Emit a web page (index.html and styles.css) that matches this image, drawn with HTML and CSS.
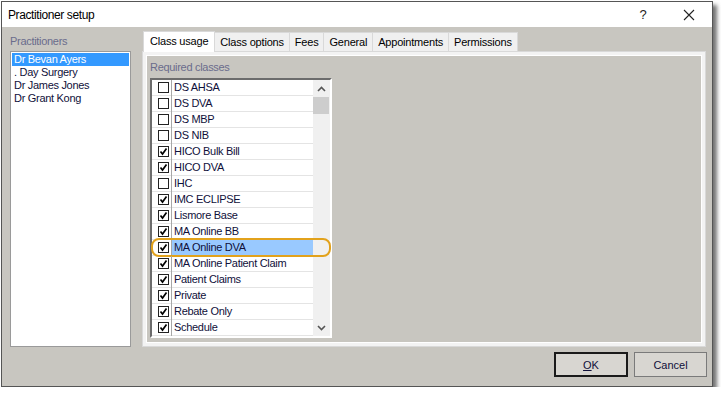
FILE: index.html
```html
<!DOCTYPE html>
<html lang="en">
<head>
    <meta charset="utf-8">
    <title>Practitioner setup</title>
    <link rel="stylesheet" href="styles.css">
</head>
<body>
    <div class="window">
        <div class="titlebar">
            <span class="title">Practitioner setup</span>
            <span class="help">?</span>
            <span class="close">
                <svg width="12" height="12" viewBox="0 0 12 12"><path d="M1 1 L11 11 M11 1 L1 11" stroke="#222" stroke-width="1.1" fill="none"/></svg>
            </span>
        </div>

        <div class="content">
            <div class="left">
                <div class="group-label">Practitioners</div>
                <ul class="list">
                    <li class="selected">Dr Bevan Ayers</li>
                    <li>. Day Surgery</li>
                    <li>Dr James Jones</li>
                    <li>Dr Grant Kong</li>
                </ul>
            </div>

            <div class="right">
                <div class="tabs">
                    <div class="tab active">Class usage</div>
                    <div class="tab">Class options</div>
                    <div class="tab">Fees</div>
                    <div class="tab">General</div>
                    <div class="tab">Appointments</div>
                    <div class="tab">Permissions</div>
                </div>
                <div class="panel">
                    <div class="panel-inner">
                        <div class="group-label">Required classes</div>
                        <div class="checklist">
                            <div class="rows" id="rows"></div>
                            <div class="scrollbar">
                                <div class="arrow">
                                    <svg width="9" height="6" viewBox="0 0 9 6"><path d="M1 5 L4.5 1.5 L8 5" stroke="#555" stroke-width="1.6" fill="none"/></svg>
                                </div>
                                <div class="thumb"></div>
                                <div class="track"></div>
                                <div class="arrow">
                                    <svg width="9" height="6" viewBox="0 0 9 6"><path d="M1 1 L4.5 4.5 L8 1" stroke="#555" stroke-width="1.6" fill="none"/></svg>
                                </div>
                            </div>
                        </div>
                    </div>
                </div>
            </div>
        </div>

        <div class="buttons">
            <button class="btn default"><u>O</u>K</button>
            <button class="btn">Cancel</button>
        </div>
    </div>

    <script>
        var classes = [
            ["DS AHSA", false], ["DS DVA", false], ["DS MBP", false], ["DS NIB", false],
            ["HICO Bulk Bill", true], ["HICO DVA", true], ["IHC", false], ["IMC ECLIPSE", true],
            ["Lismore Base", true], ["MA Online BB", true], ["MA Online DVA", true],
            ["MA Online Patient Claim", true], ["Patient Claims", true], ["Private", true],
            ["Rebate Only", true], ["Schedule", true]
        ];
        var tick = '<svg width="9" height="9" viewBox="0 0 9 9"><path d="M1.5 4.5 L3.5 7 L7.5 1.5" stroke="#000" stroke-width="1.7" fill="none"/></svg>';
        var rows = document.getElementById("rows");
        classes.forEach(function (c) {
            var row = document.createElement("div");
            row.className = "row" + (c[0] == "MA Online DVA" ? " current" : "");
            row.innerHTML = '<span class="check"><span class="box">' + (c[1] ? tick : '') + '</span></span>' +
                '<span class="name">' + c[0] + '</span>' +
                (c[0] == "MA Online DVA" ? '<span class="callout"></span>' : '');
            rows.appendChild(row);
        });
    </script>
</body>
</html>
```

FILE: styles.css
```css
body {
    margin: 0;
    background: #ffffff;
    font-family: "Liberation Sans", Arial, sans-serif;
}
.window {
    box-sizing: border-box;
    margin: 1px 0 0 1px;
    width: 712px;
    height: 386px;
    border: 1px solid #555555;
    background: #c8c6c0;
    box-shadow: 4px 4px 4px rgba(0, 0, 0, 0.55);
    display: flex;
    flex-direction: column;
}
.titlebar {
    height: 25px;
    background: #ffffff;
    display: flex;
    align-items: center;
    padding-left: 6px;
    font-size: 12px;
    letter-spacing: -0.4px;
    color: #000;
}
.title {
    flex: 1;
}
.help {
    width: 46px;
    text-align: center;
    font-size: 13px;
    color: #222;
}
.close {
    width: 46px;
    display: flex;
    justify-content: center;
}
.content {
    display: flex;
    gap: 11px;
    padding: 4px 5px 0 8px;
    font-size: 11px;
    letter-spacing: -0.3px;
}
.left {
    width: 121px;
    display: flex;
    flex-direction: column;
}
.group-label {
    color: #6a6c8c;
    height: 20px;
    line-height: 14px;
    padding-top: 3px;
    box-sizing: border-box;
}
.list {
    list-style: none;
    margin: 0;
    padding: 1px;
    height: 296px;
    box-sizing: border-box;
    background: #ffffff;
    border: 1px solid #9a9a9a;
    color: #10103a;
}
.list li {
    height: 13px;
    line-height: 13px;
    padding-left: 2px;
}
.list li.selected {
    background: #3399ff;
    color: #ffffff;
}
.right {
    width: 564px;
}
.tabs {
    display: flex;
    align-items: flex-end;
    height: 20px;
    padding-left: 1px;
}
.tab {
    height: 19px;
    box-sizing: border-box;
    padding: 3px 5px 0;
    background: #f0f0f0;
    border: 1px solid #d9d9d9;
    border-bottom: none;
    border-left: none;
    color: #000;
    font-size: 11px;
    letter-spacing: -0.2px;
}
.tab.active {
    height: 21px;
    margin-bottom: -1px;
    background: #ffffff;
    border-left: 1px solid #d9d9d9;
    padding: 3px 6px 0;
    position: relative;
}
.panel {
    height: 296px;
    box-sizing: border-box;
    background: #f3f3f3;
    border: 1px solid #d9d9d9;
    padding: 3px;
}
.panel-inner {
    height: 100%;
    box-sizing: border-box;
    background: #c8c6c0;
    border: 1px solid #ffffff;
    padding: 1px 3px 0 3px;
}
.panel-inner .group-label {
    height: 21px;
    padding-top: 3px;
}
.checklist {
    width: 182px;
    height: 260px;
    box-sizing: border-box;
    display: flex;
    background: #ffffff;
    border-top: 2px solid #6c6c6c;
    border-left: 2px solid #6c6c6c;
    border-right: 2px solid #ffffff;
    border-bottom: 2px solid #ffffff;
    color: #10103a;
}
.rows {
    flex: 1;
}
.row {
    height: 16px;
    box-sizing: border-box;
    display: flex;
    align-items: center;
    border-bottom: 1px solid #e4e4e4;
    position: relative;
}
.check {
    width: 20px;
    height: 16px;
    box-sizing: border-box;
    border-right: 1px solid #a8a8a8;
    display: flex;
    align-items: center;
    justify-content: center;
    padding-left: 3px;
}
.box {
    width: 11px;
    height: 11px;
    box-sizing: border-box;
    border: 1px solid #222222;
    background: #ffffff;
    display: flex;
    align-items: center;
    justify-content: center;
}
.name {
    flex: 1;
    height: 15px;
    line-height: 15px;
    padding-left: 2px;
}
.row.current .name {
    background: #99c9ff;
}
.callout {
    position: absolute;
    left: -1px;
    right: -18px;
    top: -2px;
    bottom: -2px;
    border: 2px solid #e2a21c;
    border-radius: 8px;
}
.scrollbar {
    width: 17px;
    background: #f0f0f0;
    display: flex;
    flex-direction: column;
}
.arrow {
    height: 17px;
    display: flex;
    align-items: center;
    justify-content: center;
}
.thumb {
    height: 17px;
    margin-right: 1px;
    background: #cdcdcd;
}
.track {
    flex: 1;
}
.buttons {
    display: flex;
    justify-content: flex-end;
    gap: 6px;
    padding: 5px 5px 0 0;
}
.btn {
    width: 73px;
    height: 25px;
    box-sizing: border-box;
    background: #d8d6d1;
    border: 1px solid #7a7a7a;
    font-family: "Liberation Sans", Arial, sans-serif;
    font-size: 11px;
    color: #10103a;
    padding: 0;
}
.btn.default {
    width: 74px;
    border: 2px solid #1a1a1a;
}
```
